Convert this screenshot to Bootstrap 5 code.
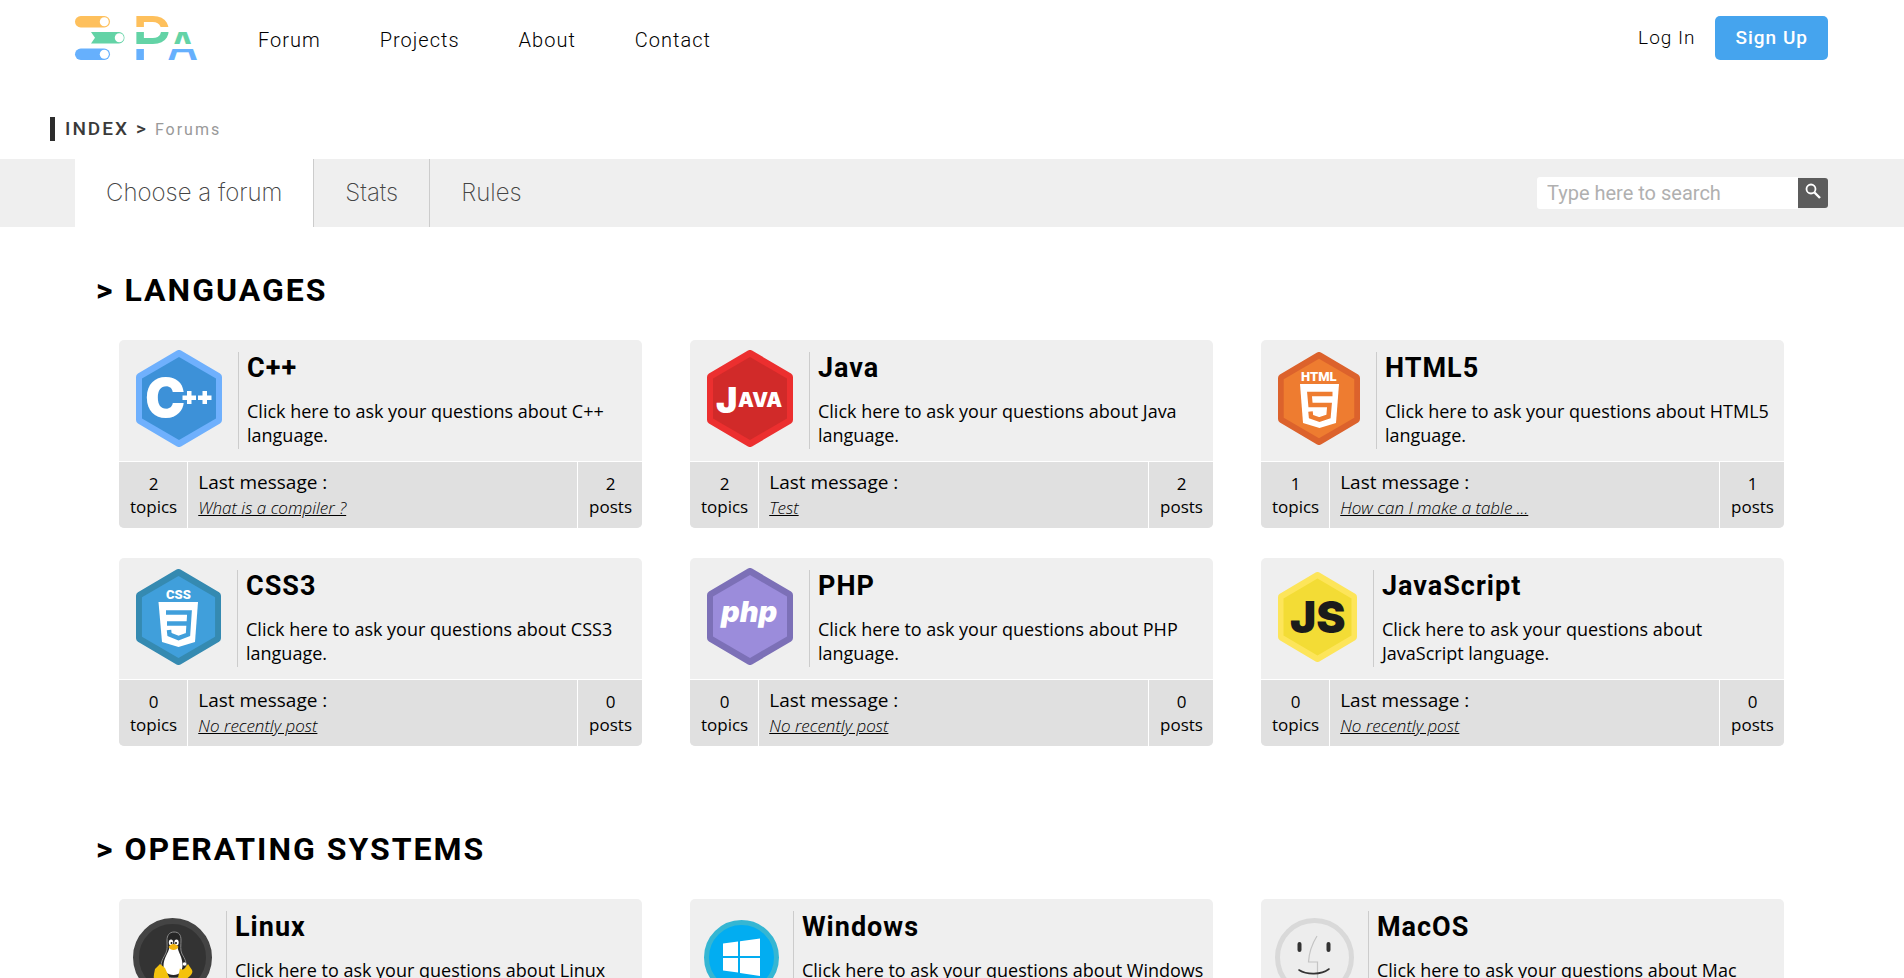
<!DOCTYPE html>
<html lang="en">
<head>
<meta charset="utf-8">
<meta name="viewport" content="width=device-width, initial-scale=1">
<title>PA - Forums</title>
<link href="https://cdn.jsdelivr.net/npm/bootstrap@5.3.0/dist/css/bootstrap.min.css" rel="stylesheet">
<style>
  body { font-family: "Open Sans", "Noto Sans", sans-serif; color: #000; background: #fff; }
  a { color: inherit; text-decoration: none; }
  .site-x { padding-left: 75px; padding-right: 76px; }

  .site-header { padding-top: 16px; font-family: Roboto, sans-serif; font-size: 19px; letter-spacing: 1px; font-weight: 300; }
  .site-header .navbar-brand { margin-right: 60px; padding: 0; }
  .main-links { gap: 59px; padding-top: 10px; font-size: 20px; }
  .main-links .nav-link, .login-link { color: #000; padding: 0; line-height: 28px; }
  .login-link { margin-right: 20px; }
  .btn-signup { --bs-btn-bg: #45a4ee; --bs-btn-color: #fff; --bs-btn-hover-bg: #2f92e0; --bs-btn-hover-color: #fff;
    font-size: 19px; font-weight: 500; letter-spacing: 1px; line-height: 28px; padding: 7px 19px; border-radius: 5px; border-color: transparent; }

  .crumbs { margin: 56px 50px 18px; border-left: 5px solid #2d2d2d; padding-left: 10px; height: 24px; line-height: 24px;
    font-family: Roboto, sans-serif; letter-spacing: 2px; }
  .crumbs ol { gap: 7px; }
  .crumb-root { font-size: 19px; font-weight: 500; color: #3a3a3a; }
  .crumb-here { font-size: 16px; color: #999; }

  .tab-strip { background: #efefef; }
  .tab-strip .nav-link { font-family: Inter, Roboto, sans-serif; font-weight: 200; font-size: 24px; line-height: 28px;
    color: #444; padding: 20px 31px; border-radius: 0; border-right: 1px solid #ccc; }
  .tab-strip .nav-link.active { background: #fff; color: #444; }
  .tab-strip li:last-child .nav-link { border-right: 0; }
  .search-box { width: 261px; height: 32px; border: 0; border-radius: 3px 0 0 3px; padding: 0 10px; font: 400 20px/32px Roboto, sans-serif; }
  .search-box::placeholder { color: #b0b0b0; opacity: 1; }
  .search-go { width: 30px; height: 30px; background: #5c5c5c; border-radius: 0 3px 3px 0; border: 0; padding: 0 0 4px; line-height: 0; }

  .forum-group { padding: 43px 120px 40px 119px; }
  .forum-group h2 { margin: 0 0 30px -23px; font: 700 32px/40px Roboto, sans-serif; letter-spacing: 2px; text-transform: uppercase; }
  .forum-grid { --bs-gutter-x: 48px; --bs-gutter-y: 30px; }
  .forum-card { border: 0; border-radius: 5px; overflow: hidden; background: #efefef; }
  .forum-top { min-height: 121px; padding-right: 8px; color: #000; }
  .forum-icon { padding: 0 16px 0 17px; height: 117px; }
  .round-icons .forum-icon { padding: 0 14px; }
  .forum-about { margin-top: 12px; border-left: 1px solid #ccc; padding-left: 8px; height: 97px; }
  .forum-about h3 { margin: 0 0 15px; font: 700 27px/32px Roboto, sans-serif; letter-spacing: 1px; }
  .forum-about p { margin: 0; font-size: 18px; line-height: 24px; }
  .forum-foot { border-top: 1px solid #fff; background: #e0e0e0; height: 67px; }
  .tally { font-size: 17px; line-height: 23px; padding: 10px 10px 0 11px; text-align: center; }
  .last-post { border-left: 1px solid #fff; border-right: 1px solid #fff; padding: 7px 10px 0; }
  .last-post div { font-size: 19px; line-height: 27px; }
  .last-post a { display: inline-block; font-size: 17px; line-height: 24px; font-style: italic; font-weight: 300; text-decoration: underline; }
  .ico text { font-family: Inter, Lato, sans-serif; font-weight: 900; fill: #fff; }
</style>
</head>
<body>

<svg width="0" height="0" class="position-absolute" aria-hidden="true">
  <symbol id="hex" viewBox="0 0 86 97" preserveAspectRatio="none">
    <path d="M43 4 82 27V70L43 93 4 70V27Z" fill="var(--edge)" stroke="var(--edge)" stroke-width="8" stroke-linejoin="round"/>
    <path d="M43 7 80 28.5V68.5L43 90 6 68.5V28.5Z" fill="currentColor"/>
  </symbol>
</svg>

<header class="site-header site-x d-flex align-items-start">
  <a class="navbar-brand" href="#" aria-label="PA home">
    <svg class="d-block overflow-visible" width="123" height="45" viewBox="75 16 123 45">
      <defs>
        <linearGradient id="bands" gradientUnits="userSpaceOnUse" x1="0" y1="16" x2="0" y2="60">
          <stop offset="0" stop-color="#fec05c"/><stop offset=".26" stop-color="#fec05c"/>
          <stop offset=".26" stop-color="#fff"/><stop offset=".36" stop-color="#fff"/>
          <stop offset=".36" stop-color="#63d3a6"/><stop offset=".63" stop-color="#63d3a6"/>
          <stop offset=".63" stop-color="#fff"/><stop offset=".74" stop-color="#fff"/>
          <stop offset=".74" stop-color="#66b0fd"/><stop offset="1" stop-color="#66b0fd"/>
        </linearGradient>
      </defs>
      <rect x="75" y="16" width="35" height="11.500" rx="5.750" fill="#fec05c"/><circle cx="104.300" cy="21.700" r="4.500" fill="#fff"/>
      <path d="M91 32H119a5.500 5.750 0 0 1 0 11.500H91L95 37.700Z" fill="#63d3a6"/><circle cx="119.300" cy="37.700" r="4.500" fill="#fff"/>
      <rect x="75" y="48.500" width="35" height="11.500" rx="5.750" fill="#66b0fd"/><circle cx="104.300" cy="54.200" r="4.500" fill="#fff"/>
      <g font-family="Roboto, sans-serif" font-weight="500" fill="url(#bands)" letter-spacing="0">
        <text x="132" y="60" font-size="61">P</text><text x="168" y="60" font-size="44">A</text>
      </g>
    </svg>
  </a>
  <nav><ul class="nav main-links">
    <li><a class="nav-link" href="#">Forum</a></li>
    <li><a class="nav-link" href="#">Projects</a></li>
    <li><a class="nav-link" href="#">About</a></li>
    <li><a class="nav-link" href="#">Contact</a></li>
  </ul></nav>
  <div class="ms-auto d-flex align-items-center">
    <a class="login-link" href="#">Log In</a>
    <button type="button" class="btn btn-signup">Sign Up</button>
  </div>
</header>

<nav class="crumbs" aria-label="breadcrumb">
  <ol class="list-unstyled d-flex align-items-baseline mb-0">
    <li class="crumb-root"><a href="#">INDEX</a></li>
    <li class="crumb-root" aria-hidden="true">&gt;</li>
    <li class="crumb-here">Forums</li>
  </ol>
</nav>

<div class="tab-strip site-x d-flex align-items-center justify-content-between">
  <ul class="nav">
    <li><a class="nav-link active" href="#">Choose a forum</a></li>
    <li><a class="nav-link" href="#">Stats</a></li>
    <li><a class="nav-link" href="#">Rules</a></li>
  </ul>
  <form class="d-flex align-items-center" role="search">
    <input class="search-box" type="search" placeholder="Type here to search" aria-label="Type here to search">
    <button class="search-go" type="submit" aria-label="Search">
      <svg width="16" height="16" viewBox="0 0 16 16" fill="none" stroke="#fff"><circle cx="6" cy="6" r="4.500" stroke-width="1.800"/><path d="M9.500 9.500 15 15" stroke-width="2.400"/></svg>
    </button>
  </form>
</div>

<main>
<section class="forum-group">
  <h2>&gt; Languages</h2>
  <div class="row forum-grid">
    <div class="col-4"><article class="card forum-card">
      <a class="forum-top d-flex" href="#">
        <div class="forum-icon d-flex align-items-center">
          <svg class="ico" width="86" height="97" viewBox="0 0 86 97" style="--edge:#6fb0fd;color:#3d91d8"><use href="#hex"/>
            <text x="9" y="67" font-size="54">C</text>
            <path d="M51 41h4.500v4.500h4.500v4.500h-4.500v4h-4.500v-4h-4.500v-4.500h4.500zM66.500 41h4.500v4.500h4.500v4.500h-4.500v4h-4.500v-4h-4.500v-4.500h4.500z" fill="#fff"/></svg>
        </div>
        <div class="forum-about flex-fill"><h3>C++</h3><p>Click here to ask your questions about C++ language.</p></div>
      </a>
      <div class="forum-foot d-flex">
        <div class="tally">2<br>topics</div>
        <div class="last-post flex-fill"><div>Last message :</div><a href="#">What is a compiler ?</a></div>
        <div class="tally">2<br>posts</div>
      </div>
    </article></div>

    <div class="col-4"><article class="card forum-card">
      <a class="forum-top d-flex" href="#">
        <div class="forum-icon d-flex align-items-center">
          <svg class="ico" width="86" height="97" viewBox="0 0 86 97" style="--edge:#ec2f2f;color:#d12a29"><use href="#hex"/>
            <text x="9" y="63" font-size="36">J</text><text x="31" y="57" font-size="20">AVA</text></svg>
        </div>
        <div class="forum-about flex-fill"><h3>Java</h3><p>Click here to ask your questions about Java language.</p></div>
      </a>
      <div class="forum-foot d-flex">
        <div class="tally">2<br>topics</div>
        <div class="last-post flex-fill"><div>Last message :</div><a href="#">Test</a></div>
        <div class="tally">2<br>posts</div>
      </div>
    </article></div>

    <div class="col-4"><article class="card forum-card">
      <a class="forum-top d-flex" href="#">
        <div class="forum-icon d-flex align-items-center">
          <svg class="ico" width="82" height="93" viewBox="0 0 82 93" style="--edge:#dc622c;color:#ee7c30"><use href="#hex"/>
            <text x="23" y="29" font-size="13" style="font-family:Roboto">HTML</text>
            <path d="M22 32H61L58 71 41.500 76 25 71Z" fill="#fff"/>
            <path d="M54.500 42H31.500L32.500 53H51.500L50.500 64.500 41.500 67.500 33 64.500 32.500 59.500" fill="none" stroke="#ee7c30" stroke-width="4.500"/></svg>
        </div>
        <div class="forum-about flex-fill"><h3>HTML5</h3><p>Click here to ask your questions about HTML5 language.</p></div>
      </a>
      <div class="forum-foot d-flex">
        <div class="tally">1<br>topics</div>
        <div class="last-post flex-fill"><div>Last message :</div><a href="#">How can I make a table ...</a></div>
        <div class="tally">1<br>posts</div>
      </div>
    </article></div>

    <div class="col-4"><article class="card forum-card">
      <a class="forum-top d-flex" href="#">
        <div class="forum-icon d-flex align-items-center">
          <svg class="ico" width="85" height="96" viewBox="0 0 85 96" style="--edge:#358ab1;color:#409fdb"><use href="#hex"/>
            <text x="30" y="30" font-size="13" style="font-family:Roboto">CSS</text>
            <path d="M22.500 33H62L59 73 42.500 78 26 73Z" fill="#fff"/>
            <path d="M30 43.500H53.500L52 65.500 42.500 69 33.500 65.500 33 61M31 54.500H52" fill="none" stroke="#409fdb" stroke-width="4.500"/></svg>
        </div>
        <div class="forum-about flex-fill"><h3>CSS3</h3><p>Click here to ask your questions about CSS3 language.</p></div>
      </a>
      <div class="forum-foot d-flex">
        <div class="tally">0<br>topics</div>
        <div class="last-post flex-fill"><div>Last message :</div><a href="#">No recently post</a></div>
        <div class="tally">0<br>posts</div>
      </div>
    </article></div>

    <div class="col-4"><article class="card forum-card">
      <a class="forum-top d-flex" href="#">
        <div class="forum-icon d-flex align-items-center">
          <svg class="ico" width="86" height="97" viewBox="0 0 86 97" style="--edge:#7c70b7;color:#9b8cdb"><use href="#hex"/>
            <text x="14" y="54" font-size="29" font-style="italic">php</text></svg>
        </div>
        <div class="forum-about flex-fill"><h3>PHP</h3><p>Click here to ask your questions about PHP language.</p></div>
      </a>
      <div class="forum-foot d-flex">
        <div class="tally">0<br>topics</div>
        <div class="last-post flex-fill"><div>Last message :</div><a href="#">No recently post</a></div>
        <div class="tally">0<br>posts</div>
      </div>
    </article></div>

    <div class="col-4"><article class="card forum-card">
      <a class="forum-top d-flex" href="#">
        <div class="forum-icon d-flex align-items-center">
          <svg class="ico" width="79" height="90" viewBox="0 0 79 90" style="--edge:#fde55a;color:#f3dc35"><use href="#hex"/>
            <text x="12" y="61" font-size="44" style="fill:#1b1b1b">JS</text></svg>
        </div>
        <div class="forum-about flex-fill"><h3>JavaScript</h3><p>Click here to ask your questions about JavaScript language.</p></div>
      </a>
      <div class="forum-foot d-flex">
        <div class="tally">0<br>topics</div>
        <div class="last-post flex-fill"><div>Last message :</div><a href="#">No recently post</a></div>
        <div class="tally">0<br>posts</div>
      </div>
    </article></div>
  </div>
</section>

<section class="forum-group round-icons">
  <h2>&gt; Operating systems</h2>
  <div class="row forum-grid">
    <div class="col-4"><article class="card forum-card">
      <a class="forum-top d-flex" href="#">
        <div class="forum-icon d-flex align-items-center">
          <svg width="79" height="79" viewBox="0 0 79 79"><circle cx="39.500" cy="39.500" r="36.500" fill="#333" stroke="#444" stroke-width="6"/>
            <path d="M41 14c-5 0-7 4-7 8 0 6 1 9-2 15-3 5-5 9-3 14 2 7 6 9 12 9s10-3 12-9c1-6-1-10-4-15-2-4-1-9-1-14 0-5-2-8-7-8z" fill="#262626" stroke="#8a8a8a"/>
            <path d="M36.500 29c-1 6-6 11-6 19 0 5 4 9 10 9s9-4 9-10c0-8-4-12-5-18z" fill="#fff"/>
            <ellipse cx="38" cy="24.500" rx="2.200" ry="3" fill="#fff"/><ellipse cx="43.500" cy="24.500" rx="2.200" ry="3" fill="#fff"/>
            <circle cx="38.500" cy="25" r="1" fill="#111"/><circle cx="43" cy="25" r="1" fill="#111"/>
            <path d="M35.500 29c2-4 8-4 10 0-2 4-8 4-10 0z" fill="#f2b50f"/><circle cx="51.500" cy="46" r="1.800" fill="#fff"/>
            <path d="M27 46l5 4 4 9c1 4-2 6-5 5l-9-3c-2-1-1-3-1-5l1-5zM47 50c1 2 3 2 5 0l3-4 4 6c1 2 0 4-2 6l-6 5c-3 2-6 0-6-3z" fill="#f4c20d"/></svg>
        </div>
        <div class="forum-about flex-fill"><h3>Linux</h3><p>Click here to ask your questions about Linux system.</p></div>
      </a>
      <div class="forum-foot d-flex">
        <div class="tally">0<br>topics</div>
        <div class="last-post flex-fill"><div>Last message :</div><a href="#">No recently post</a></div>
        <div class="tally">0<br>posts</div>
      </div>
    </article></div>

    <div class="col-4"><article class="card forum-card">
      <a class="forum-top d-flex" href="#">
        <div class="forum-icon d-flex align-items-center">
          <svg width="75" height="75" viewBox="0 0 75 75"><circle cx="37.500" cy="37.500" r="35" fill="#02adf1" stroke="#35b6d3" stroke-width="5"/>
            <path d="M19 23.500 34 21.500V36H19zM36 21.200 56 18.500V36H36zM19 38H34V52.500L19 50.500zM36 38H56V56L36 53z" fill="#fff"/></svg>
        </div>
        <div class="forum-about flex-fill"><h3>Windows</h3><p>Click here to ask your questions about Windows system.</p></div>
      </a>
      <div class="forum-foot d-flex">
        <div class="tally">0<br>topics</div>
        <div class="last-post flex-fill"><div>Last message :</div><a href="#">No recently post</a></div>
        <div class="tally">0<br>posts</div>
      </div>
    </article></div>

    <div class="col-4"><article class="card forum-card">
      <a class="forum-top d-flex" href="#">
        <div class="forum-icon d-flex align-items-center">
          <svg width="79" height="79" viewBox="0 0 79 79" fill="none"><circle cx="39.500" cy="39.500" r="37" fill="#ededed" stroke="#d9d9d9" stroke-width="5"/>
            <path d="M24.500 26v6M53.500 26v6" stroke="#333" stroke-width="4" stroke-linecap="round"/>
            <path d="M42 18c-5 8-8 17-8.500 26H42.500v16" stroke="#c4c4c4" stroke-width="1.200"/>
            <path d="M24 52c8 5 22 5 30-1" stroke="#333" stroke-width="1.600" stroke-linecap="round"/></svg>
        </div>
        <div class="forum-about flex-fill"><h3>MacOS</h3><p>Click here to ask your questions about Mac system.</p></div>
      </a>
      <div class="forum-foot d-flex">
        <div class="tally">0<br>topics</div>
        <div class="last-post flex-fill"><div>Last message :</div><a href="#">No recently post</a></div>
        <div class="tally">0<br>posts</div>
      </div>
    </article></div>
  </div>
</section>
</main>

<script src="https://cdn.jsdelivr.net/npm/bootstrap@5.3.0/dist/js/bootstrap.bundle.min.js"></script>
</body>
</html>
